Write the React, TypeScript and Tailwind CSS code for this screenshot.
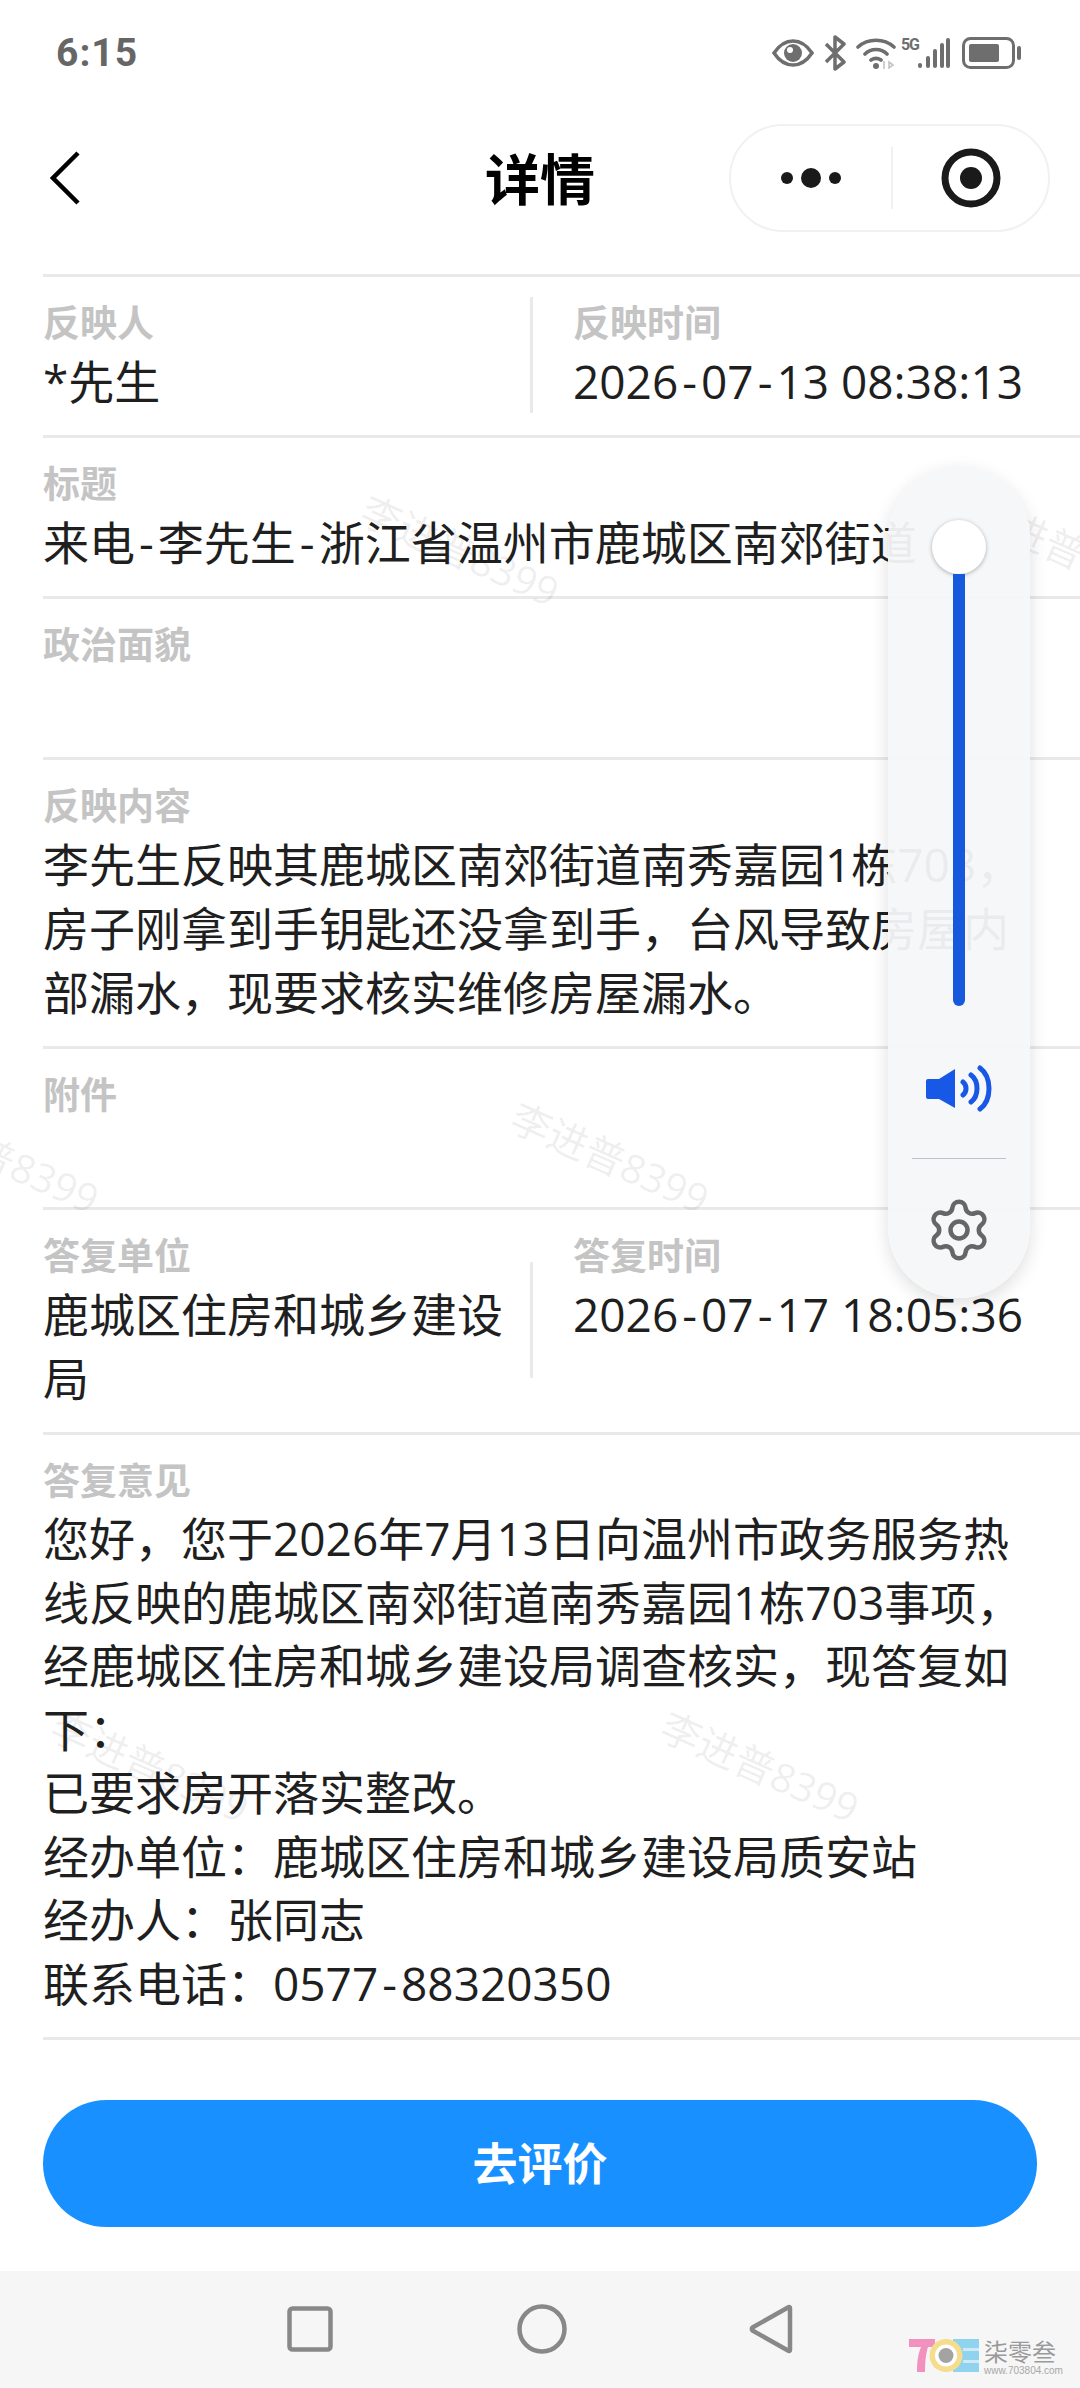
import type { ReactNode } from "react";
import { Settings } from "lucide-react";

const FONT = "font-['Open_Sans','Noto_Sans_CJK_SC',sans-serif]";

// full-width punctuation
const COMMA = "\uFF0C";
const COLON = "\uFF1A";

const WATERMARKS = [
  "left-[460px] top-[551px]",
  "left-[1070px] top-[551px]",
  "left-[0px] top-[1158px]",
  "left-[610px] top-[1158px]",
  "left-[150px] top-[1767px]",
  "left-[760px] top-[1767px]",
];

// the hyphen in the picture is wider than any installed font's
const Dash = () => <span className="mx-[4px]">-</span>;

function Label({ children }: { children: string }) {
  return <div className="text-[37px] leading-[52px] font-bold text-[#c4c4c4]">{children}</div>;
}

function Value({ children }: { children?: ReactNode }) {
  return <div className="text-[46px] leading-[64px] min-h-[64px] text-[#1f1f1f]">{children}</div>;
}

function Row({ label, children }: { label: string; children?: ReactNode }) {
  return (
    <div className="pt-[20px] pb-[22px] pr-[43px] border-b-[3px] border-[#e9e9e9]">
      <Label>{label}</Label>
      <Value>{children}</Value>
    </div>
  );
}

function SplitRow({ a, b, date }: { a: [string, string]; b: string; date: ReactNode }) {
  return (
    <div className="flex items-center pt-[20px] pb-[22px] pr-[10px] border-b-[3px] border-[#e9e9e9]">
      <div className="w-[487px] self-start">
        <Label>{a[0]}</Label>
        <Value>{a[1]}</Value>
      </div>
      <div className="w-[3px] h-[116px] bg-[#e9e9e9] shrink-0" />
      <div className="flex-1 pl-[40px] self-start whitespace-nowrap">
        <Label>{b}</Label>
        <Value>{date}</Value>
      </div>
    </div>
  );
}

function StatusIcons() {
  return (
    <div className="flex items-center gap-[9px] text-[#6e6e6e]">
      <svg width="42" height="28" viewBox="0 0 42 28" fill="none">
        <path d="M2 14C8 5 14 2 21 2s13 3 19 12c-6 9-12 12-19 12S8 23 2 14Z" stroke="currentColor" strokeWidth="3.5" />
        <circle cx="21" cy="14" r="9" fill="currentColor" />
        <circle cx="18" cy="11" r="3" fill="#fff" />
      </svg>
      <svg width="24" height="36" viewBox="0 0 24 36" fill="none">
        <path d="M3 9l18 18-9 7V2l9 7L3 27" stroke="currentColor" strokeWidth="3.5" strokeLinejoin="round" />
      </svg>
      <div className="flex items-start gap-[5px]">
        <svg width="40" height="32" viewBox="0 0 40 32" fill="none">
          <path d="M2 10c10-9 26-9 36 0M9 17c6-6 16-6 22 0M15 23c3-2 7-2 10 0" stroke="currentColor" strokeWidth="3.6" strokeLinecap="round" />
          <circle cx="20" cy="29" r="3" fill="currentColor" />
          <path d="M28 24v8M33 25l4 3-4 3z" stroke="#c4c4c4" strokeWidth="1.6" />
        </svg>
        <div className="flex items-start">
          <span className="text-[16px] leading-[15px] font-bold font-['Roboto',sans-serif] tracking-[-1px]">5G</span>
          <svg width="32" height="32" viewBox="0 0 32 32" className="-ml-[1px]">
            <rect x="0" y="26" width="4" height="5" rx="2" fill="currentColor" />
            <rect x="8" y="19" width="4" height="12" rx="2" fill="currentColor" />
            <rect x="15" y="12" width="4" height="19" rx="2" fill="currentColor" />
            <rect x="22" y="6" width="4" height="25" rx="2" fill="currentColor" />
            <rect x="28" y="1" width="4" height="30" rx="2" fill="currentColor" />
          </svg>
        </div>
      </div>
      <svg width="60" height="32" viewBox="0 0 60 32" className="ml-[3px]">
        <rect x="1.5" y="1.5" width="50" height="29" rx="7" fill="none" stroke="currentColor" strokeWidth="3" />
        <rect x="7" y="7" width="30" height="18" rx="2" fill="currentColor" />
        <rect x="55" y="9" width="4" height="14" rx="2" fill="currentColor" />
      </svg>
    </div>
  );
}

function VolumePanel() {
  return (
    <div className="absolute left-[888px] top-[466px] w-[142px] h-[832px] rounded-full bg-[#f6f7f9]/95 shadow-[0_6px_18px_rgba(0,0,0,0.13)] flex flex-col items-center pt-[54px] z-20">
      <div className="w-[54px] h-[54px] rounded-full bg-white shadow-[0_1px_4px_rgba(0,0,0,0.3)] shrink-0" />
      <div className="w-[12px] h-[432px] bg-[#1759dc] rounded-b-full shrink-0" />
      <svg width="68" height="49" viewBox="0 0 68 49" className="mt-[58px] shrink-0" fill="none">
        <path d="M3 15h11L30 5v39L14 35H3a2 2 0 0 1-2-2V17a2 2 0 0 1 2-2Z" fill="#1759e6" />
        <path d="M38 18c4 3 4 10 0 13M46 11c8 6 8 21 0 27M55 4c12 9 12 32 0 41" stroke="#1759e6" strokeWidth="5" strokeLinecap="round" />
      </svg>
      <div className="w-[94px] h-[1px] bg-[#b9c2cc] mt-[45px] shrink-0" />
      <Settings size={68} strokeWidth={1.6} className="text-[#666] mt-[37px] shrink-0" />
    </div>
  );
}

function Logo() {
  return (
    <div className="absolute right-[22px] bottom-[12px] flex items-start gap-[5px]">
      <svg width="70" height="33" viewBox="0 0 70 33">
        <path d="M0 0h26v8h-7c-2 6-3 14-3 25H8c0-10 1-18 4-25H0Z" fill="#f291bd" />
        <path d="M44 0h26v33H44Z" fill="#8fd3ee" />
        <path d="M54 9h16v3H54ZM54 21h16v3H54Z" fill="#cfeaf6" />
        <circle cx="37" cy="16.500" r="16.500" fill="#f6dd8e" />
        <circle cx="37" cy="16.500" r="11" fill="#fff" />
        <circle cx="37" cy="16.500" r="7.500" fill="#a3a3a3" />
      </svg>
      <div className="flex flex-col w-[74px] font-['Noto_Sans_CJK_SC',sans-serif]">
        <span className="text-[24px] leading-[24px] text-[#9a9a9a]">柒零叁</span>
        <span className="text-[10px] leading-[11px] text-[#a8a8a8] mt-[2px] font-['Liberation_Sans',sans-serif]">www.703804.com</span>
      </div>
    </div>
  );
}

export default function App() {
  return (
    <div className={`relative w-[1080px] h-[2388px] bg-white overflow-hidden flex flex-col ${FONT}`}>
      {/* Status bar */}
      <div className="h-[106px] pl-[56px] pr-[58px] flex items-center justify-between shrink-0">
        <span className="text-[39px] font-bold text-[#666] font-['Roboto',sans-serif] tracking-[1px]">6:15</span>
        <StatusIcons />
      </div>

      {/* Nav */}
      <div className="h-[144px] px-[30px] grid grid-cols-[321px_1fr_321px] items-center shrink-0">
        <svg width="30" height="54" viewBox="0 0 30 54" fill="none" className="ml-[20px]">
          <path d="M28 2 3 27l25 25" stroke="#000" strokeWidth="4.5" />
        </svg>
        <h1 className="text-[55px] leading-none font-bold text-black text-center">详情</h1>
        <div className="h-[108px] rounded-full border-2 border-[#f1f1f1] flex items-center">
          <div className="w-[160px] flex items-center justify-center gap-[8px]">
            <span className="w-[12px] h-[12px] rounded-full bg-[#1a1a1a]" />
            <span className="w-[20px] h-[20px] rounded-full bg-[#1a1a1a]" />
            <span className="w-[12px] h-[12px] rounded-full bg-[#1a1a1a]" />
          </div>
          <div className="w-[2px] h-[62px] bg-[#f1f1f1]" />
          <div className="flex-1 flex items-center justify-center">
            <svg width="60" height="60" viewBox="0 0 60 60">
              <circle cx="30" cy="30" r="26" fill="none" stroke="#1a1a1a" strokeWidth="7" />
              <circle cx="30" cy="30" r="11" fill="#1a1a1a" />
            </svg>
          </div>
        </div>
      </div>

      {/* Details */}
      <div className="ml-[43px] mt-[24px] border-t-[3px] border-[#e9e9e9] shrink-0">
        <SplitRow
          a={["反映人", "*先生"]}
          b="反映时间"
          date={<>2026<Dash />07<Dash />13 08:38:13</>}
        />
        <Row label="标题">
          来电<Dash />李先生<Dash />浙江省温州市鹿城区南郊街道
        </Row>
        <Row label="政治面貌" />
        <Row label="反映内容">
          {`李先生反映其鹿城区南郊街道南秀嘉园1栋703${COMMA}房子刚拿到手钥匙还没拿到手${COMMA}台风导致房屋内部漏水${COMMA}现要求核实维修房屋漏水。`}
        </Row>
        <Row label="附件" />
        <SplitRow
          a={["答复单位", "鹿城区住房和城乡建设局"]}
          b="答复时间"
          date={<>2026<Dash />07<Dash />17 18:05:36</>}
        />
        <div className="pt-[20px] pb-[22px] pr-[43px] border-b-[3px] border-[#e9e9e9] text-[46px] leading-[63.5px] text-[#1f1f1f]">
          <Label>答复意见</Label>
          <div>{`您好${COMMA}您于2026年7月13日向温州市政务服务热线反映的鹿城区南郊街道南秀嘉园1栋703事项${COMMA}经鹿城区住房和城乡建设局调查核实${COMMA}现答复如下${COLON}`}</div>
          <div>已要求房开落实整改。</div>
          <div>{`经办单位${COLON}鹿城区住房和城乡建设局质安站`}</div>
          <div>{`经办人${COLON}张同志`}</div>
          <div>{`联系电话${COLON}0577`}<Dash />88320350</div>
        </div>
      </div>

      {/* Action */}
      <div className="flex-1 flex flex-col justify-end px-[43px] pb-[44px]">
        <button className="h-[127px] rounded-full bg-[#1890ff] text-white text-[45px] font-bold">去评价</button>
      </div>

      {/* Android nav */}
      <div className="relative h-[117px] bg-[#f6f6f6] shrink-0 flex items-start justify-center pt-[33px]">
        <div className="flex items-center">
          <svg width="46" height="46" viewBox="0 0 46 46" fill="none" className="mr-[184px]">
            <rect x="2.500" y="2.500" width="41" height="41" rx="3" stroke="#888" strokeWidth="4.5" />
          </svg>
          <svg width="50" height="50" viewBox="0 0 50 50" fill="none" className="mr-[182px]">
            <circle cx="25" cy="25" r="22.500" stroke="#888" strokeWidth="4.5" />
          </svg>
          <svg width="44" height="50" viewBox="0 0 44 50" fill="none">
            <path d="M41 4v42a1 1 0 0 1-1.600 .8L3.500 26.500a2 2 0 0 1 0-3L39.400 3.200A1 1 0 0 1 41 4Z" stroke="#888" strokeWidth="4.5" strokeLinejoin="round" />
          </svg>
        </div>
        <Logo />
      </div>

      {/* Watermarks */}
      {WATERMARKS.map((pos) => (
        <span
          key={pos}
          className={`absolute ${pos} -translate-x-1/2 -translate-y-1/2 rotate-[24deg] whitespace-nowrap text-[40px] leading-none text-[#000]/[0.08] pointer-events-none z-10`}
        >
          李进普8399
        </span>
      ))}

      <VolumePanel />
    </div>
  );
}
